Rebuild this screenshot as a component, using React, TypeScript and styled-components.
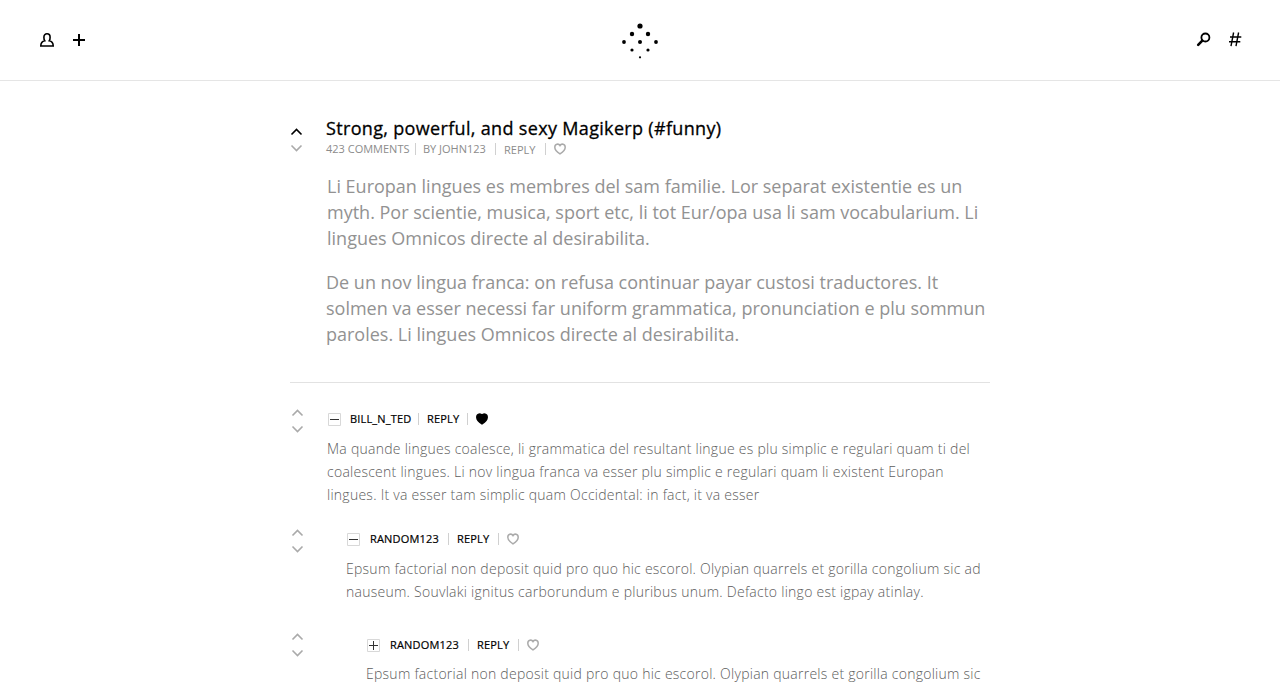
import React from 'react';
import styled, { createGlobalStyle } from 'styled-components';

const Global = createGlobalStyle`
  * { box-sizing: border-box; }
  html, body { margin: 0; height: 100%; overflow: hidden; }
  body { background: #fff; font-family: "Open Sans", sans-serif; color: #000; -webkit-font-smoothing: antialiased; }
  svg { display: block; flex: none; }
  p, h1 { margin: 0; }
`;
const Page = styled.div`height: 690px; overflow: hidden;`;
const Header = styled.header`
  height: 81px; border-bottom: 1px solid #e5e5e5; padding: 0 36px 0 38px;
  display: grid; grid-template-columns: 583px 38px 1fr; align-items: center;
`;
const Tools = styled.nav<{ $end?: boolean }>`
  display: flex; gap: 14px; align-items: center; justify-content: ${p => (p.$end ? 'flex-end' : 'flex-start')};
`;
const Main = styled.main`width: 700px; margin: 0 auto;`;
const Post = styled.article`
  display: flex; height: 302px; border-bottom: 1px solid #e2e2e2; padding-top: 34px;
`;
const Thread = styled.section`padding: 26px 0 0 1px;`;
const Comment = styled.article<{ $height: number }>`display: flex; height: ${p => p.$height}px;`;
const Votes = styled.div<{ $top: number }>`
  width: 14px; flex: none; display: flex; flex-direction: column; gap: 8px; padding-top: ${p => p.$top}px;
`;
const Body = styled.div<{ $indent: number; $top?: number }>`
  padding: ${p => p.$top ?? 0}px 0 0 ${p => p.$indent}px; flex: 1; min-width: 0;
`;
const Title = styled.h1`
  font-size: 18px; line-height: 26px; font-weight: 400; letter-spacing: 0.33px; margin-bottom: 1px;
  -webkit-text-stroke: 0.3px #000; white-space: nowrap;
`;
const Meta = styled.div<{ $strong?: boolean }>`
  display: flex; align-items: center; height: 14px; font-size: 11px; line-height: 14px;
  color: ${p => (p.$strong ? '#000' : '#8c8c8c')}; white-space: nowrap;
  letter-spacing: ${p => (p.$strong ? '0.17px' : '0')};
  -webkit-text-stroke: ${p => (p.$strong ? '0.2px #000' : '0')};
`;
const Item = styled.span<{ $width: number; $drop?: boolean }>`
  width: ${p => p.$width}px; padding-top: ${p => (p.$drop ? 2 : 0)}px;
`;
const Rule = styled.span<{ $gap: number }>`width: 1px; height: 12px; background: #d0d0d0; margin-right: ${p => p.$gap}px;`;
const Lead = styled.p<{ $top: number; $shift?: boolean }>`
  padding: ${p => p.$top}px 0 0 ${p => (p.$shift ? 1 : 0)}px;
  font-size: 18px; line-height: 26px; color: #929292; white-space: nowrap;
`;
const Text = styled.p<{ $top: number }>`
  margin: ${p => p.$top}px 0 0 -1px; font-size: 14px; line-height: 23px; font-weight: 300;
  letter-spacing: 0.257px; color: #5c5c5c; white-space: nowrap;
`;

const Chevron = ({ down, dark }: { down?: boolean; dark?: boolean }) => (
  <svg width="13" height="8" viewBox="0 0 13 8" fill="none" stroke={dark ? '#000' : '#aaa'} strokeWidth="1.6">
    <path d={down ? 'M1.5 1.5l5 5 5-5' : 'M1.5 6.5l5-5 5 5'} />
  </svg>
);
const Heart = ({ filled }: { filled?: boolean }) => (
  <svg width="12" height="12" viewBox="0 0 12 12" fill={filled ? '#000' : 'none'} stroke={filled ? '#000' : '#aaa'} strokeWidth="1.5">
    <path d="M6 10.900C3 9 .8 6.900 .8 4.200 .8 .9 4.600 .2 6 2.500 7.400 .2 11.200 .9 11.200 4.200 11.200 6.900 9 9 6 10.900z" />
  </svg>
);
const Toggle = ({ plus }: { plus?: boolean }) => (
  <svg width="13" height="13" viewBox="0 0 13 13" fill="none">
    <path d="M.5.5h12v12H.5z" stroke="#d8d8d8" />
    <path d={plus ? 'M2 6.500h9M6.500 2v9' : 'M2 6.500h9'} stroke="#333" />
  </svg>
);
const User = () => (
  <svg width="18" height="18" viewBox="0 0 18 18" fill="none" stroke="#000" strokeWidth="1.6">
    <path d="M6.700 9.700C5.900 8.700 5.900 7.600 5.900 6.200 5.900 4 7.100 2.800 9 2.800s3.100 1.200 3.100 3.400c0 1.400 0 2.500-.8 3.500 2.700.7 3.900 1.700 3.900 5.300H2.800c0-3.600 1.200-4.600 3.900-5.300z" />
  </svg>
);
const Plus = () => (
  <svg width="18" height="18" viewBox="0 0 18 18" stroke="#000" strokeWidth="2"><path d="M3 9h12M9 3v12" /></svg>
);
const Search = () => (
  <svg width="18" height="18" viewBox="0 0 18 18" fill="none" stroke="#000">
    <circle cx="11.400" cy="6.500" r="4" strokeWidth="1.8" />
    <path d="M8.300 9.700L4.200 13.800" strokeWidth="2.600" strokeLinecap="round" />
  </svg>
);
const Hash = () => (
  <svg width="18" height="18" viewBox="0 0 18 18" fill="none" stroke="#000" strokeWidth="1.4">
    <path d="M7.600 1.500L5 15.200M12.600 1.500L10 15.200M4 6h11.300M3 10.800h11.300" />
  </svg>
);
const dots = [[20, 6, 2.6], [12, 14, 2.2], [28, 14, 2.2], [4, 22, 1.9], [20, 22, 2], [36, 22, 1.9], [12, 30, 1.6], [28, 30, 1.6], [20, 37.3, 1.1]];
const Logo = () => (
  <svg width="38" height="40" viewBox="1 0 38 40">
    {dots.map(([x, y, r]) => <circle key={`${x}-${y}`} cx={x} cy={y} r={r} />)}
  </svg>
);

type ReplyProps = {
  name: string; nameWidth: number; indent: number; height: number; lines: string[];
  liked?: boolean; plus?: boolean; top?: number; textTop?: number;
};
const Reply = ({ name, nameWidth, indent, height, lines, liked, plus, top = 3, textTop = 11 }: ReplyProps) => (
  <Comment $height={height}>
    <Votes $top={0}><Chevron /><Chevron down /></Votes>
    <Body $indent={indent} $top={top}>
      <Meta $strong>
        <Item $width={liked ? 22 : 23}><Toggle plus={plus} /></Item>
        <Item $width={nameWidth}>{name}</Item><Rule $gap={8} />
        <Item $width={liked ? 40 : 41}>REPLY</Item><Rule $gap={8} /><Heart filled={liked} />
      </Meta>
      <Text $top={textTop}>{lines.map(l => <React.Fragment key={l}>{l}<br /></React.Fragment>)}</Text>
    </Body>
  </Comment>
);
export default function App() {
  return (
    <Page>
      <Global />
      <Header>
        <Tools><User /><Plus /></Tools>
        <Logo />
        <Tools $end><Search /><Hash /></Tools>
      </Header>
      <Main>
        <Post>
          <Votes $top={13}><Chevron dark /><Chevron down /></Votes>
          <Body $indent={22}>
            <Title>Strong, powerful, and sexy Magikerp (#funny)</Title>
            <Meta>
              <Item $width={89}>423 COMMENTS</Item><Rule $gap={7} />
              <Item $width={72}>BY JOHN123</Item><Rule $gap={8} />
              <Item $width={41} $drop>REPLY</Item><Rule $gap={8} /><Heart />
            </Meta>
            <Lead $top={17} $shift>Li Europan lingues es membres del sam familie. Lor separat existentie es un<br />myth. Por scientie, musica, sport etc, li tot Eur/opa usa li sam vocabularium. Li<br />lingues Omnicos directe al desirabilita.</Lead>
            <Lead $top={18}>De un nov lingua franca: on refusa continuar payar custosi traductores. It<br />solmen va esser necessi far uniform grammatica, pronunciation e plu sommun<br />paroles. Li lingues Omnicos directe al desirabilita.</Lead>
          </Body>
        </Post>
        <Thread>
          <Reply name="BILL_N_TED" nameWidth={68} indent={23} height={120} liked lines={['Ma quande lingues coalesce, li grammatica del resultant lingue es plu simplic e regulari quam ti del', 'coalescent lingues. Li nov lingua franca va esser plu simplic e regulari quam li existent Europan', 'lingues. It va esser tam simplic quam Occidental: in fact, it va esser']} />
          <Reply name="RANDOM123" nameWidth={78} indent={42} height={104} plus={false} lines={['Epsum factorial non deposit quid pro quo hic escorol. Olypian quarrels et gorilla congolium sic ad', 'nauseum. Souvlaki ignitus carborundum e pluribus unum. Defacto lingo est igpay atinlay.']} />
          <Reply name="RANDOM123" nameWidth={78} indent={62} height={105} plus top={5} textTop={10} lines={['Epsum factorial non deposit quid pro quo hic escorol. Olypian quarrels et gorilla congolium sic']} />
        </Thread>
      </Main>
    </Page>
  );
}
